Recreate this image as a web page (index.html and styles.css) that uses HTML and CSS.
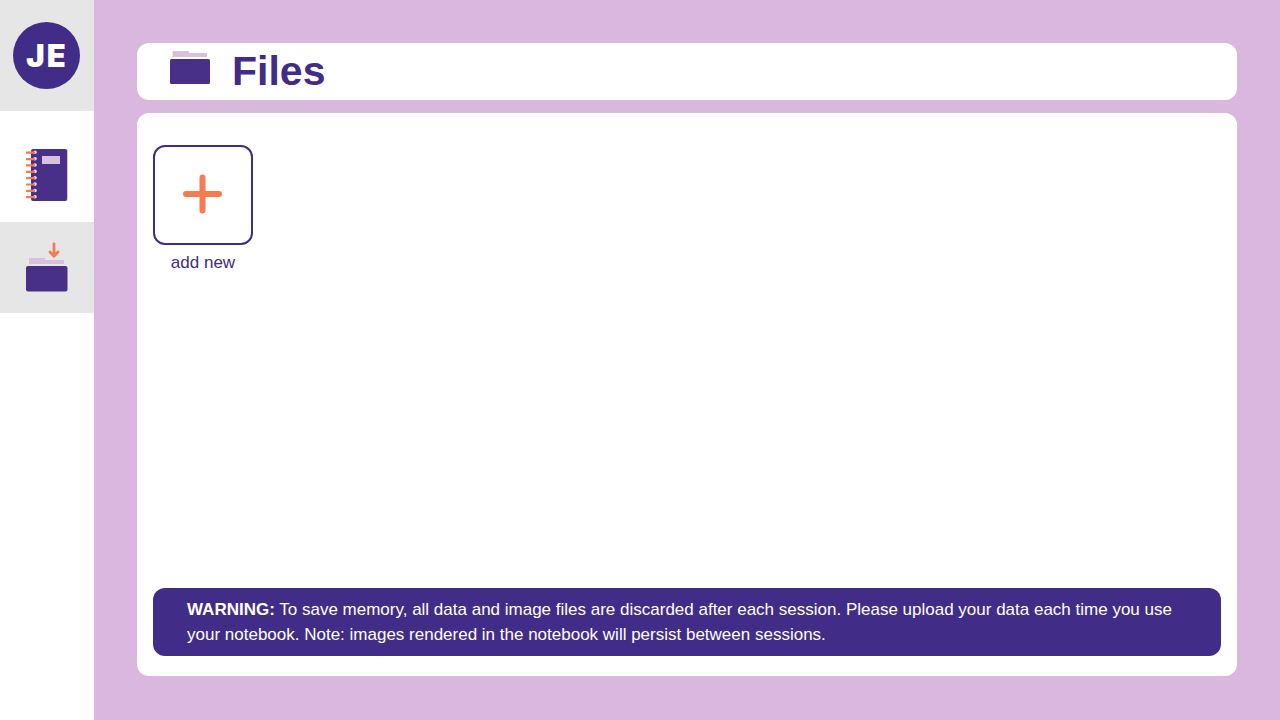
FILE: index.html
```html
<!DOCTYPE html>
<html lang="en">
<head>
<meta charset="utf-8">
<meta name="viewport" content="width=device-width, initial-scale=1">
<title>Files</title>
<link rel="stylesheet" href="styles.css">
</head>
<body>
<div class="app">
  <nav class="sidebar" aria-label="Main">
    <a class="brand" href="#home" aria-label="Home">
      <svg width="67" height="67" viewBox="0 0 67 67">
        <circle class="purple" cx="33.5" cy="33.5" r="33.5"/>
        <text class="brand-text" x="33" y="45" dx="0 2" text-anchor="middle">JE</text>
      </svg>
    </a>
    <a class="nav-item nav-notebook" href="#notebook" aria-label="Notebook">
      <svg width="42" height="52" viewBox="0 0 42 52">
        <rect class="tint" x="7" y="0" width="35" height="52" rx="2"/>
        <rect class="icon-purple" x="5" y="0" width="36" height="52" rx="2"/>
        <rect class="tint" x="16" y="7" width="18" height="8"/>
        <g class="holes">
          <circle cx="9" cy="3.3" r="1.8"/><circle cx="9" cy="9.7" r="1.8"/><circle cx="9" cy="16" r="1.8"/><circle cx="9" cy="22.4" r="1.8"/>
          <circle cx="9" cy="28.8" r="1.8"/><circle cx="9" cy="35.1" r="1.8"/><circle cx="9" cy="41.5" r="1.8"/><circle cx="9" cy="47.8" r="1.8"/>
        </g>
        <path class="rings" d="M0 3.7H9M0 10.1H9M0 16.4H9M0 22.8H9M0 29.1H9M0 35.5H9M0 41.8H9M0 48.1H9"/>
      </svg>
    </a>
    <a class="nav-item nav-files" href="#files" aria-label="Files" aria-current="page">
      <svg width="42" height="50" viewBox="0 0 42 50">
        <path class="arrow" d="M28 2V14M24 10L28 14.2L32 10"/>
        <path class="tint" d="M3 16H19V18H38V22H3Z"/>
        <rect class="icon-purple" x="0" y="24" width="41.5" height="25.5" rx="2"/>
      </svg>
    </a>
  </nav>
  <main class="content">
    <header class="title-bar">
      <svg class="title-icon" width="40" height="33" viewBox="0 0 40 33">
        <path class="tint" d="M2.6 0H19V2H37V6H2.6Z"/>
        <rect class="icon-purple" x="0" y="8" width="40" height="25" rx="1.5"/>
      </svg>
      <h1 class="title">Files</h1>
    </header>
    <section class="panel">
      <div class="file-grid">
        <div class="file">
          <button class="add-button" type="button" aria-labelledby="add-label">
            <svg width="40" height="40" viewBox="0 0 40 40"><path class="plus" d="M19.5 3.5V36.5M3 20H36"/></svg>
          </button>
          <span class="file-label" id="add-label">add new</span>
        </div>
      </div>
      <p class="warning"><strong>WARNING:</strong> To save memory, all data and image files are discarded after each session. Please upload your data each time you use your notebook. Note: images rendered in the notebook will persist between sessions.</p>
    </section>
  </main>
</div>
</body>
</html>
```
FILE: styles.css
```css
* {
  box-sizing: border-box;
}

body {
  margin: 0;
  font-family: "Liberation Sans", Arial, sans-serif;
  font-size: 17px;
  line-height: 25px;
  color: #412c88;
  background: #d9b7de;
}

svg {
  display: block;
}

.app {
  display: flex;
  min-height: 100vh;
}

.sidebar {
  flex: 0 0 94px;
  background: #fff;
}

.brand {
  display: flex;
  padding: 22px 13px;
  background: #e6e6e6;
}

.nav-item {
  display: flex;
  padding-left: 26px;
}

.nav-notebook {
  padding-top: 38px;
  padding-bottom: 21px;
}

.nav-files {
  padding-top: 20px;
  padding-bottom: 21px;
  background: #e6e6e6;
}

.brand-text {
  font-family: Inter, sans-serif;
  font-size: 31px;
  font-weight: 900;
  fill: #fff;
}

.purple {
  fill: #412c88;
}

.icon-purple {
  fill: #482f87;
}

.tint {
  fill: #d8c1de;
}

.holes {
  fill: #eadcf0;
}

.rings {
  fill: none;
  stroke: #f67b50;
  stroke-width: 2.2;
}

.arrow {
  fill: none;
  stroke: #f67b50;
  stroke-width: 2.8;
  stroke-linecap: round;
  stroke-linejoin: round;
}

.plus {
  fill: none;
  stroke: #f67b50;
  stroke-width: 6;
  stroke-linecap: round;
}

.content {
  flex: 1;
  display: flex;
  flex-direction: column;
  gap: 13px;
  padding: 43px 43px 44px;
}

.title-bar {
  display: flex;
  align-items: flex-start;
  gap: 22px;
  padding: 8px 33px 0;
  border-radius: 12px;
  background: #fff;
}

.title {
  margin: 0;
  padding-bottom: 8px;
  font-size: 41px;
  line-height: 41px;
  font-weight: 700;
}

.panel {
  flex: 1;
  display: flex;
  flex-direction: column;
  justify-content: space-between;
  gap: 32px;
  padding: 32px 16px 20px;
  border-radius: 12px;
  background: #fff;
}

.file-grid {
  display: flex;
  flex-wrap: wrap;
  gap: 16px;
}

.file {
  display: flex;
  flex-direction: column;
  align-items: center;
  gap: 5px;
}

.add-button {
  display: flex;
  align-items: center;
  justify-content: center;
  width: 100px;
  height: 100px;
  padding: 0 0 2px;
  border: 2px solid #412c88;
  border-radius: 12px;
  background: #fff;
  cursor: pointer;
}

.warning {
  margin: 0;
  padding: 9px 34px;
  border-radius: 12px;
  color: #fff;
  background: #412c88;
}
```
